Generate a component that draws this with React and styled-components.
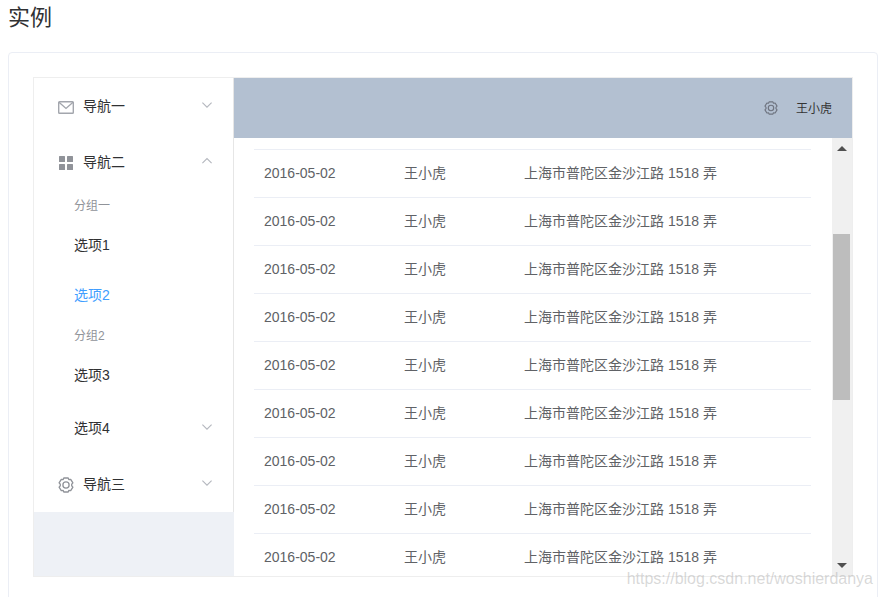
import React from "react";
import styled, { createGlobalStyle } from "styled-components";

const Global = createGlobalStyle`
  html, body { margin: 0; padding: 0; background: #fff; height: 597px; overflow: hidden; }
  body { font-family: "Liberation Sans", "Noto Sans CJK SC", sans-serif; }
  * { box-sizing: border-box; }
`;

const Page = styled.div`
  position: relative;
  width: 882px;
  height: 597px;
  padding: 0 4px 0 8px;
  overflow: hidden;
`;
const Title = styled.h3`
  margin: 0;
  height: 52px;
  padding-top: 5px;
  font-size: 22px;
  line-height: 26px;
  font-weight: 400;
  color: #303133;
`;
const Card = styled.div`
  width: 870px;
  height: 560px;
  padding: 24px;
  border: 1px solid #ebeef5;
  border-radius: 4px;
`;
const Container = styled.div`
  display: flex;
  width: 820px;
  height: 500px;
  border: 1px solid #eee;
`;
const Aside = styled.aside`
  flex: 0 0 200px;
  background: #eef1f6;
`;
const Menu = styled.nav`
  background: #fff;
  border-right: 1px solid #e6e6e6;
`;
const MenuTitle = styled.div`
  display: flex;
  align-items: center;
  height: 56px;
  padding: 0 21px 0 ${(p) => (p.$nested ? 40 : 20)}px;
  font-size: 14px;
  color: #303133;
`;
const IconBox = styled.span`
  display: flex;
  justify-content: center;
  align-items: center;
  width: 24px;
  height: 24px;
  margin: 2px 5px 0 0;
  color: #909399;
`;
const Label = styled.span`
  flex: 1;
  padding-bottom: 2px;
`;
const Chevron = styled.svg`
  display: block;
  width: 10px;
  height: 12px;
  margin: -3px 0 0;
  fill: none;
  stroke: #b4b7be;
  stroke-width: 1.1;
`;
const GroupTitle = styled.div`
  height: 30px;
  padding: 1px 0 0 40px;
  font-size: 12px;
  line-height: 30px;
  color: #909399;
`;
const Option = styled.div`
  height: 50px;
  padding-left: 40px;
  font-size: 14px;
  line-height: 50px;
  color: ${(p) => (p.$active ? "#409eff" : "#303133")};
`;
const Content = styled.div`
  flex: 1;
  display: flex;
  flex-direction: column;
  min-width: 0;
`;
const Header = styled.header`
  flex: 0 0 60px;
  display: flex;
  justify-content: flex-end;
  align-items: center;
  padding-right: 20px;
  background: #b3c0d1;
  font-size: 12px;
  color: #333;
`;
const HeaderName = styled.span`
  padding-bottom: 2px;
`;
const HeaderGear = styled.span`
  display: flex;
  margin: 0 18px 0 0;
`;
const Body = styled.div`
  flex: 1;
  display: flex;
  min-height: 0;
`;
const Main = styled.main`
  flex: 1;
  overflow: hidden;
  padding: 11px 20px 0;
`;
const Table = styled.table`
  width: 557px;
  border-collapse: collapse;
  border-top: 1px solid #ebeef5;
  table-layout: fixed;
  font-size: 14px;
  color: #606266;
`;
const Row = styled.tr`
  height: 48px;
  border-bottom: 1px solid #ebeef5;
`;
const Cell = styled.td`
  width: ${(p) => p.$w}px;
  padding: 0 10px ${(p) => (p.$cjk ? 4 : 2)}px;
  white-space: nowrap;
`;
const Scrollbar = styled.div`
  flex: 0 0 20px;
  position: relative;
  background: #f0f0f0;
`;
const Thumb = styled.div`
  position: absolute;
  top: 96px;
  left: 1px;
  width: 17px;
  height: 166px;
  background: #bdbdbd;
`;
const ArrowUp = styled.div`
  position: absolute;
  top: 8px;
  left: 5px;
  border-left: 5px solid transparent;
  border-right: 5px solid transparent;
  border-bottom: 5px solid #505050;
`;
const ArrowDown = styled.div`
  position: absolute;
  bottom: 8px;
  left: 5px;
  border-left: 5px solid transparent;
  border-right: 5px solid transparent;
  border-top: 5px solid #505050;
`;
const Watermark = styled.div`
  position: absolute;
  right: 9px;
  top: 569px;
  font-size: 16px;
  line-height: 19px;
  color: rgba(170, 170, 170, 0.45);
  white-space: nowrap;
  pointer-events: none;
`;

const Down = () => (
  <Chevron viewBox="0 0 10 12"><path d="M0.4 3.6 L5 8.2 L9.6 3.6" /></Chevron>
);
const Up = () => (
  <Chevron viewBox="0 0 10 12"><path d="M0.4 8.2 L5 3.6 L9.6 8.2" /></Chevron>
);
const MailIcon = () => (
  <svg width="16" height="13" viewBox="0 0 16 13" fill="none" stroke="#a3a6ad" strokeWidth="1.4">
    <rect x="0.7" y="0.7" width="14.6" height="11.6" rx="0.8" />
    <path d="M1 1.2 L8 7.4 L15 1.2" />
  </svg>
);
const GridIcon = () => (
  <svg width="14" height="14" viewBox="0 0 14 14" fill="#909399">
    <rect x="0" y="0" width="6" height="6" rx="0.5" />
    <rect x="8" y="0" width="6" height="6" rx="0.5" />
    <rect x="0" y="8" width="6" height="6" rx="0.5" />
    <rect x="8" y="8" width="6" height="6" rx="0.5" />
  </svg>
);
const GearIcon = ({ size = 16, color = "#909399" }) => (
  <svg width={size} height={size} viewBox="0 0 16 16" fill="none" stroke={color} strokeWidth={1.3} strokeLinejoin="round">
    <path d="M5.8 1h4.4l.6 1.6 1.9-.3 2.2 3.6-1.2 1.3v1.6l1.2 1.3-2.2 3.6-1.9-.3-.6 1.6H5.8l-.6-1.6-1.9.3-2.2-3.6 1.2-1.3V7.2L1.1 5.9l2.2-3.6 1.9.3z" />
    <circle cx="8" cy="8" r="3.1" />
  </svg>
);

const rows = Array.from({ length: 9 });

export default function App() {
  return (
    <Page>
      <Global />
      <Title>实例</Title>
      <Card>
        <Container>
          <Aside>
            <Menu>
              <MenuTitle>
                <IconBox><MailIcon /></IconBox>
                <Label>导航一</Label>
                <Down />
              </MenuTitle>
              <MenuTitle>
                <IconBox><GridIcon /></IconBox>
                <Label>导航二</Label>
                <Up />
              </MenuTitle>
              <GroupTitle>分组一</GroupTitle>
              <Option>选项1</Option>
              <Option $active>选项2</Option>
              <GroupTitle>分组2</GroupTitle>
              <Option>选项3</Option>
              <MenuTitle $nested>
                <Label>选项4</Label>
                <Down />
              </MenuTitle>
              <MenuTitle>
                <IconBox><GearIcon /></IconBox>
                <Label>导航三</Label>
                <Down />
              </MenuTitle>
            </Menu>
          </Aside>
          <Content>
            <Header>
              <HeaderGear><GearIcon size={14} color="#6f7480" /></HeaderGear>
              <HeaderName>王小虎</HeaderName>
            </Header>
            <Body>
              <Main>
                <Table>
                  <tbody>
                    {rows.map((_, i) => (
                      <Row key={i}>
                        <Cell $w={140}>2016-05-02</Cell>
                        <Cell $w={120} $cjk>王小虎</Cell>
                        <Cell $w={297} $cjk>上海市普陀区金沙江路 1518 弄</Cell>
                      </Row>
                    ))}
                  </tbody>
                </Table>
              </Main>
              <Scrollbar>
                <ArrowUp />
                <Thumb />
                <ArrowDown />
              </Scrollbar>
            </Body>
          </Content>
        </Container>
      </Card>
      <Watermark>https://blog.csdn.net/woshierdanya</Watermark>
    </Page>
  );
}
